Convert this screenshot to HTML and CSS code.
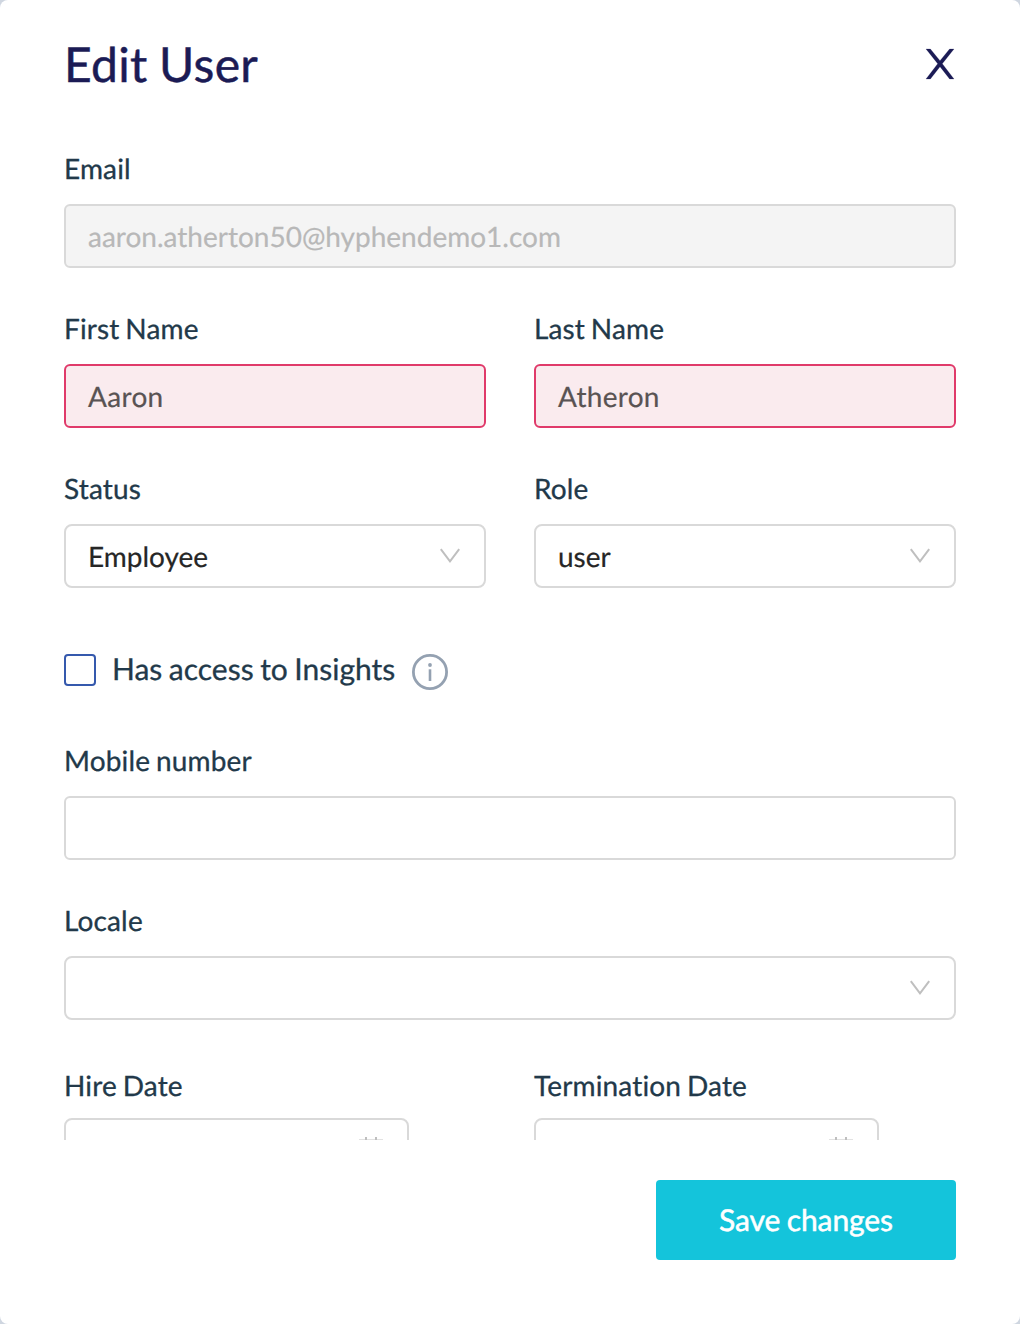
FILE: index.html
```html
<!DOCTYPE html>
<html lang="en">
<head>
<meta charset="utf-8">
<title>Edit User</title>
<link rel="stylesheet" href="styles.css">
</head>
<body>
<main class="modal">
  <header class="modal-header">
    <h1 class="title">Edit User</h1>
    <button class="close" aria-label="Close">
      <svg width="28" height="30" viewBox="0 0 28 30"><path d="M0 0h4.4L14 11.7 23.6 0H28L16.3 14.7 28 30h-4.4L14 17.7 4.4 30H0l11.7-15.3z" fill="#1b1b55" stroke="#1b1b55" stroke-width=".2"/></svg>
    </button>
  </header>
  <form class="form">
    <div class="field">
      <label class="label">Email</label>
      <div class="control disabled">aaron.atherton50@hyphendemo1.com</div>
    </div>
    <div class="row">
      <div class="field">
        <label class="label">First Name</label>
        <div class="control error">Aaron</div>
      </div>
      <div class="field">
        <label class="label">Last Name</label>
        <div class="control error">Atheron</div>
      </div>
    </div>
    <div class="row">
      <div class="field">
        <label class="label">Status</label>
        <div class="control select">Employee
          <svg class="chevron" width="22" height="16" viewBox="0 0 22 16"><path d="M1.8 1.2 11 13.3 20.2 1.2"/></svg>
        </div>
      </div>
      <div class="field">
        <label class="label">Role</label>
        <div class="control select">user
          <svg class="chevron" width="22" height="16" viewBox="0 0 22 16"><path d="M1.8 1.2 11 13.3 20.2 1.2"/></svg>
        </div>
      </div>
    </div>
    <div class="check-row">
      <span class="checkbox"></span>
      <label class="check-label">Has access to Insights</label>
      <svg class="info" width="36" height="36" viewBox="0 0 36 36"><circle cx="18" cy="18" r="16.6" fill="none" stroke="#94a1b1" stroke-width="2.8"/><circle cx="18" cy="11" r="1.9" fill="#94a1b1"/><path d="M16.7 15.3h2.6V27h-2.6z" fill="#94a1b1"/></svg>
    </div>
    <div class="field">
      <label class="label">Mobile number</label>
      <div class="control"></div>
    </div>
    <div class="field">
      <label class="label">Locale</label>
      <div class="control select"><span></span>
        <svg class="chevron" width="22" height="16" viewBox="0 0 22 16"><path d="M1.8 1.2 11 13.3 20.2 1.2"/></svg>
      </div>
    </div>
    <div class="row dates">
      <div class="field">
        <label class="label">Hire Date</label>
        <div class="control date">
          <svg class="calendar" width="24" height="26" viewBox="0 0 24 26"><path d="M0 2h24v24H0zM2 4v20h20V4z" fill-rule="evenodd" fill="#e2e2e2"/><path d="M6 0h2v6H6zM16 0h2v6h-2z" fill="#bfbfbf"/></svg>
        </div>
      </div>
      <div class="field">
        <label class="label">Termination Date</label>
        <div class="control date">
          <svg class="calendar" width="24" height="26" viewBox="0 0 24 26"><path d="M0 2h24v24H0zM2 4v20h20V4z" fill-rule="evenodd" fill="#e2e2e2"/><path d="M6 0h2v6H6zM16 0h2v6h-2z" fill="#bfbfbf"/></svg>
        </div>
      </div>
    </div>
  </form>
  <footer class="modal-footer">
    <button class="save">Save changes</button>
  </footer>
</main>
</body>
</html>
```
FILE: styles.css
```css
* { box-sizing: border-box; }
body {
  margin: 0;
  background: #cfd6e0;
  font-family: Lato, "Liberation Sans", sans-serif;
  font-variant-ligatures: none;
  text-rendering: geometricPrecision;
}
.modal {
  display: flex;
  flex-direction: column;
  height: 1324px;
  padding: 36px 64px 64px;
  background: #fff;
  border-radius: 8px;
}
.modal-header {
  display: flex;
  justify-content: space-between;
  align-items: center;
  height: 56px;
}
.title {
  margin: 0;
  padding-top: 2px;
  font-size: 48px;
  font-weight: 400;
  line-height: 56px;
  letter-spacing: 0.3px;
  word-spacing: -1px;
  color: #1b1b55;
  -webkit-text-stroke: 0.5px #1b1b55;
}
.close {
  display: flex;
  padding: 0 2px;
  border: 0;
  background: none;
}
.close svg { overflow: visible; }
.form {
  display: flex;
  flex-direction: column;
  gap: 40px;
  height: 992px;
  margin-top: 56px;
  overflow: hidden;
}
.row {
  display: grid;
  grid-template-columns: 1fr 1fr;
  gap: 48px;
}
.field {
  display: flex;
  flex-direction: column;
  gap: 16px;
}
.label {
  font-size: 28px;
  line-height: 40px;
  letter-spacing: 0.15px;
  word-spacing: -1.5px;
  color: #22394a;
  -webkit-text-stroke: 0.3px #22394a;
}
.control {
  display: flex;
  align-items: center;
  justify-content: space-between;
  height: 64px;
  padding: 0 22px;
  border: 2px solid #d9d9d9;
  border-radius: 6px;
  font-size: 28px;
  line-height: 40px;
  color: #595353;
  -webkit-text-stroke: 0.2px currentColor;
}
.disabled {
  background: #f4f4f4;
  color: #b8b8b8;
}
.error {
  background: #faebee;
  border-color: #e03a6a;
  letter-spacing: 0.3px;
}
.select {
  padding-right: 23px;
  border-radius: 8px;
  color: #262626;
}
.chevron {
  fill: none;
  stroke: #bfbfbf;
  stroke-width: 2;
}
.check-row {
  display: flex;
  align-items: center;
  height: 36px;
  margin: 26px 0 10px;
}
.checkbox {
  width: 32px;
  height: 32px;
  margin: 0 16px 4px 0;
  border: 2px solid #3559ad;
  border-radius: 4px;
}
.check-label {
  width: 284px;
  margin: 0 16px 6px 0;
  font-size: 30px;
  line-height: 40px;
  word-spacing: -1.2px;
  white-space: nowrap;
  color: #22394a;
  -webkit-text-stroke: 0.3px #22394a;
}
.dates { margin-top: 5px; }
.dates .field { gap: 13px; }
.date {
  align-items: flex-start;
  justify-content: flex-end;
  width: 345px;
  padding-top: 17px;
  padding-right: 24px;
  border-radius: 8px;
}
.modal-footer {
  display: flex;
  justify-content: flex-end;
  margin-top: 40px;
}
.save {
  width: 300px;
  height: 80px;
  padding: 0;
  border: 0;
  border-radius: 4px;
  background: #14c4db;
  color: #fff;
  font: 400 30px/40px Lato, "Liberation Sans", sans-serif;
  font-variant-ligatures: none;
  letter-spacing: -0.1px;
  word-spacing: -1px;
  text-rendering: inherit;
  -webkit-text-stroke: 0.5px #fff;
}
```
